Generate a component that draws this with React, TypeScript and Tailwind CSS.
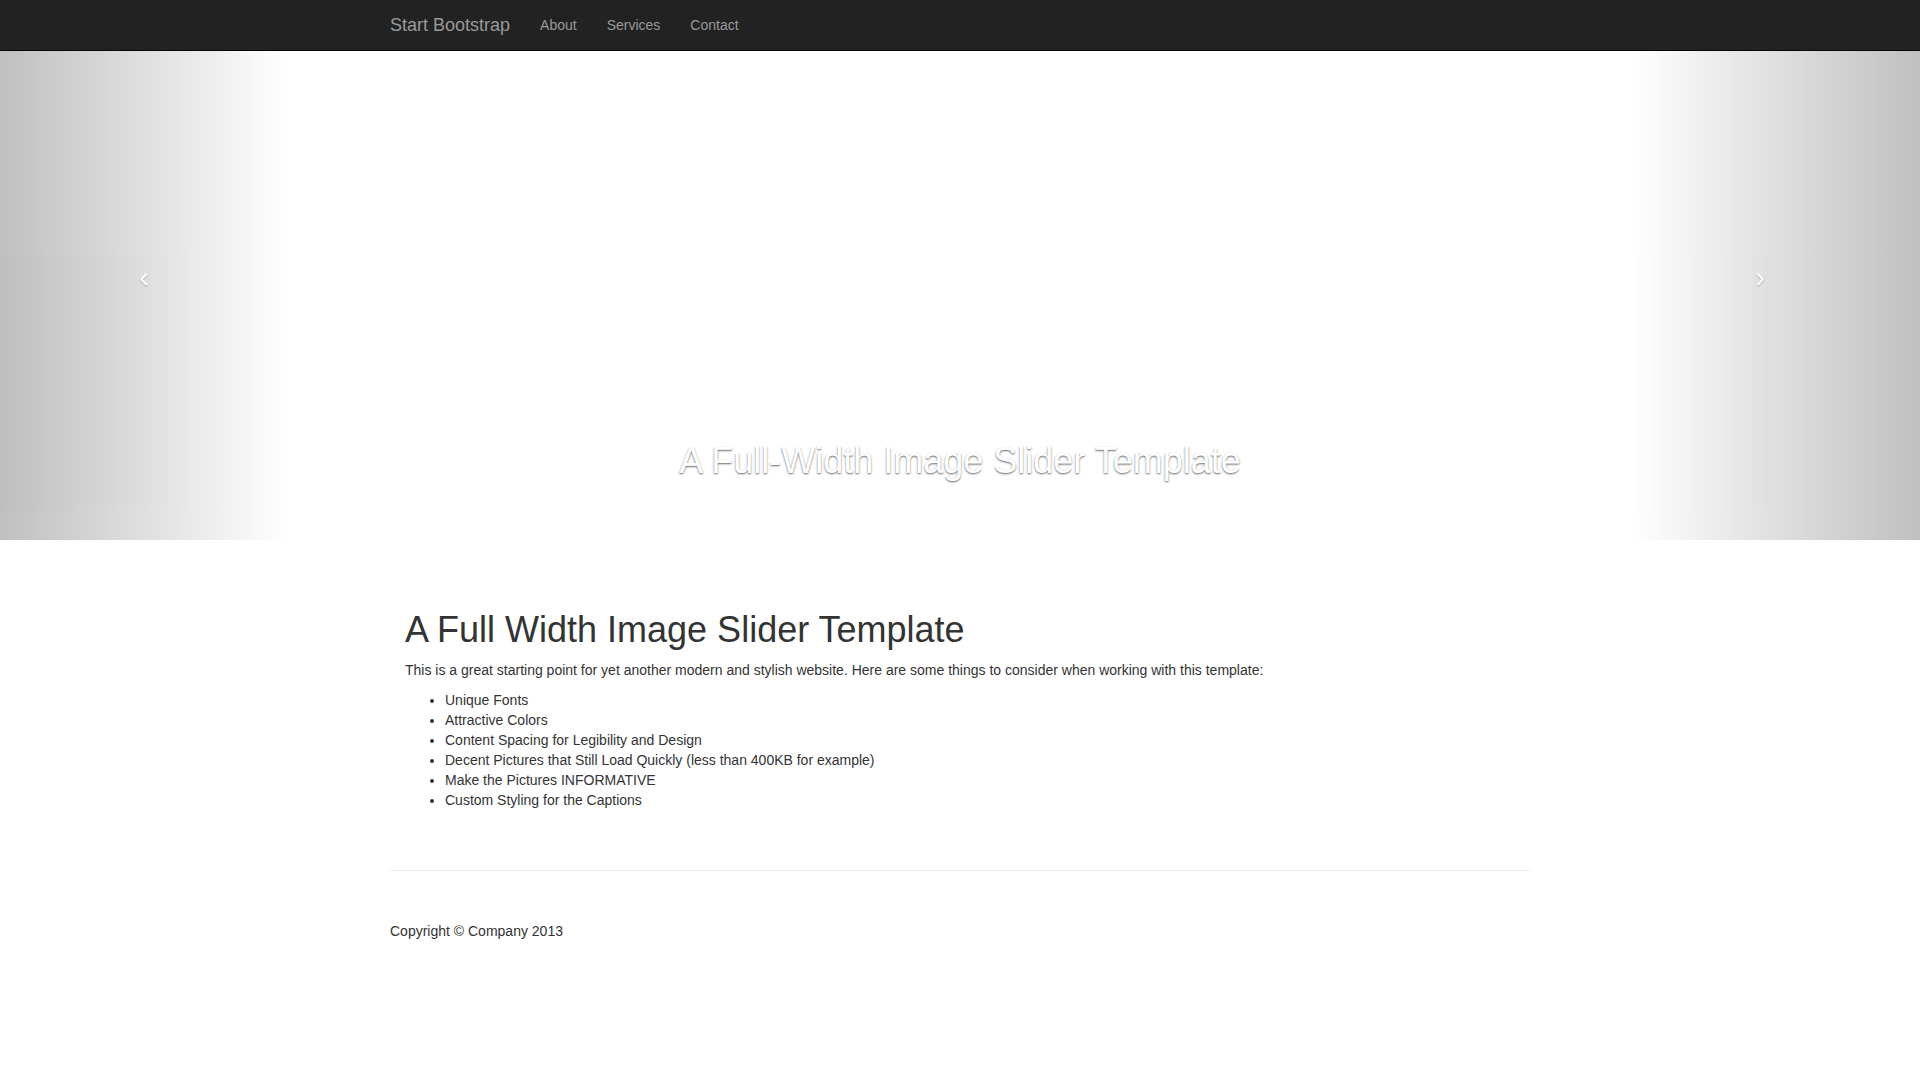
import React from "react";

export default function App() {
  const items = [
    "Unique Fonts",
    "Attractive Colors",
    "Content Spacing for Legibility and Design",
    "Decent Pictures that Still Load Quickly (less than 400KB for example)",
    "Make the Pictures INFORMATIVE",
    "Custom Styling for the Captions",
  ];
  return (
    <div className="min-h-[1080px] bg-white text-[#333] text-[14px] leading-[20px] font-['Liberation_Sans',Arial,sans-serif]">
      <nav className="h-[51px] bg-[#222] border-b border-[#080808]">
        <div className="w-[1170px] mx-auto px-[15px] flex items-center h-[50px]">
          <a className="text-[18px] leading-[20px] text-[#999] pr-[15px] py-[15px]">Start Bootstrap</a>
          <a className="px-[15px] py-[15px] text-[#999]">About</a>
          <a className="px-[15px] py-[15px] text-[#999]">Services</a>
          <a className="px-[15px] py-[15px] text-[#999]">Contact</a>
        </div>
      </nav>

      <div className="relative h-[489px] bg-white overflow-hidden">
        <div className="absolute left-0 top-0 bottom-0 w-[15%] opacity-50 bg-[linear-gradient(to_right,rgba(0,0,0,0.5),rgba(0,0,0,0.0001))]">
          <span className="absolute top-[211px] left-[129px] w-[30px] text-center text-[30px] leading-[30px] text-white [text-shadow:0_1px_2px_rgba(0,0,0,0.6)]">
            ‹
          </span>
        </div>
        <div className="absolute right-0 top-0 bottom-0 w-[15%] opacity-50 bg-[linear-gradient(to_left,rgba(0,0,0,0.5),rgba(0,0,0,0.0001))]">
          <span className="absolute top-[211px] right-[145px] w-[30px] text-center text-[30px] leading-[30px] text-white [text-shadow:0_1px_2px_rgba(0,0,0,0.6)]">
            ›
          </span>
        </div>
        <div className="absolute left-[20%] right-[20%] bottom-[59px] text-center">
          <h1 className="text-[36px] leading-[1.1] text-white [text-shadow:0_1px_2px_rgba(0,0,0,0.6)]">
            A Full-Width Image Slider Template
          </h1>
        </div>
      </div>

      <div className="w-[1170px] mx-auto px-[15px]">
        <div className="pt-[70px] px-[15px]">
          <h1 className="text-[36px] leading-[1.1] text-[#333] mb-[10px]">A Full Width Image Slider Template</h1>
          <p className="mb-[10px]">
            This is a great starting point for yet another modern and stylish website. Here are some things to consider when working with this template:
          </p>
          <ul className="list-disc pl-[40px]">
            {items.map((t) => (
              <li key={t}>{t}</li>
            ))}
          </ul>
        </div>
        <div className="mt-[60px] border-t border-[#eee]" />
        <footer className="pt-[50px]">
          <p>Copyright © Company 2013</p>
        </footer>
      </div>
    </div>
  );
}
